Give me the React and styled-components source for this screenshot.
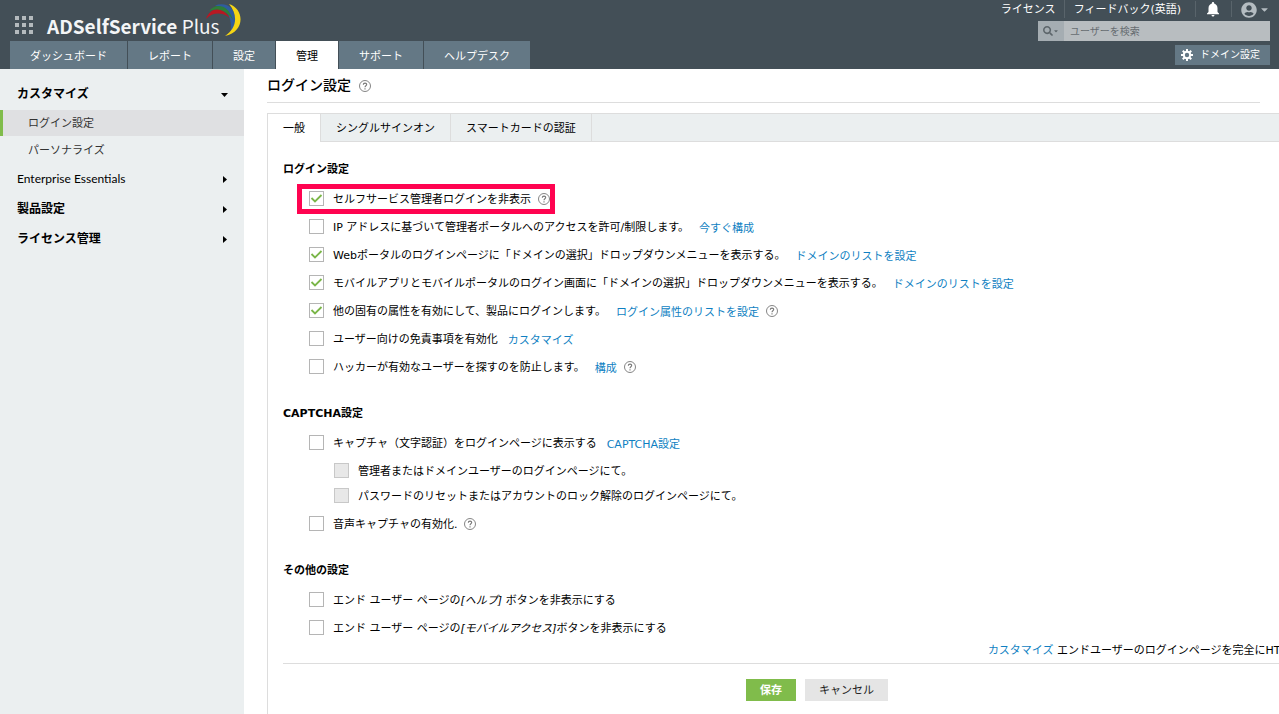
import React, { useState } from "react";
import styled, { createGlobalStyle } from "styled-components";
import { FaSearch, FaUserCircle, FaCaretDown } from "react-icons/fa";
import { MdNotifications } from "react-icons/md";

const GlobalStyle = createGlobalStyle`
    * {
        box-sizing: border-box;
    }
    body {
        margin: 0;
        background: #fff;
        color: #000;
        font: 11px/16px "DejaVu Sans", "Noto Sans CJK JP", sans-serif;
        overflow-x: hidden;
    }
    button, input {
        font: inherit;
    }
    a {
        text-decoration: none;
    }
`

const Page = styled.div`
    display: flex;
    flex-direction: column;
    min-height: 100vh;
`

/* header */

const Header = styled.header`
    display: flex;
    justify-content: space-between;
    height: 69px;
    padding: 0 9px 0 10px;
    background: #434f57;
`
const HeaderLeft = styled.div`
    display: flex;
    flex-direction: column;
    justify-content: space-between;
`
const HeaderRight = styled.div`
    display: flex;
    flex-direction: column;
    align-items: flex-end;
    gap: 4px;
`
const Brand = styled.div`
    display: flex;
    align-items: flex-start;
    height: 41px;
    padding-left: 5px;
`
const AppsButton = styled.button`
    display: grid;
    grid-template-columns: repeat(3, 4px);
    gap: 3px;
    margin: 16px 14px 0 0;
    padding: 0;
    border: 0;
    background: none;
`
const Dot = styled.span`
    width: 4px;
    height: 4px;
    background: #b4babd;
`
const BrandName = styled.span`
    padding-top: 12px;
    color: #f4f5f6;
    font: 700 19px/28px "Noto Sans CJK JP", sans-serif;
    white-space: nowrap;
`
const BrandLight = styled.span`
    font-weight: 400;
`
const Swoosh = styled.svg`
    width: 37px;
    height: 36px;
    margin: 2px 0 0 -16px;
`
const Nav = styled.nav`
    display: flex;
    gap: 1px;
`
const NavTab = styled.a`
    padding: 8px 20px 4px;
    background: ${props => (props.$active ? "#fff" : "#647885")};
    color: ${props => (props.$active ? "#000" : "#fff")};
    white-space: nowrap;
`
const TopLinks = styled.div`
    display: flex;
    align-items: center;
    height: 17px;
`
const TopLink = styled.a`
    padding: 2px 8px 0 9px;
    color: #fff;
    line-height: 16px;
    white-space: nowrap;
    & + & {
        border-left: 1px solid #59646b;
    }
`
const IconButton = styled.button`
    display: flex;
    align-items: center;
    gap: 2px;
    height: 16px;
    margin-left: 6px;
    padding: ${props => props.$pad};
    border: 0;
    border-left: 1px solid #59646b;
    background: none;
    color: ${props => props.$color};
`
const Search = styled.form`
    display: flex;
    width: 232px;
    height: 20px;
    background: #b8bdc0;
`
const SearchType = styled.button`
    display: flex;
    align-items: center;
    justify-content: center;
    width: 26px;
    padding: 0;
    border: 0;
    background: #a5adb2;
    color: #5d666b;
`
const SearchInput = styled.input`
    flex: 1;
    min-width: 0;
    padding: 2px 6px 0;
    border: 0;
    background: none;
    font-size: 10px;
    &::placeholder {
        color: #666c70;
        opacity: 1;
    }
`
const DomainButton = styled.button`
    display: flex;
    align-items: center;
    gap: 6px;
    height: 20px;
    padding: 0 10px 0 5px;
    border: 0;
    background: #647885;
    color: #fff;
    font-size: 10px;
    white-space: nowrap;
`

/* sidebar */

const Columns = styled.div`
    display: flex;
    flex: 1;
`
const Sidebar = styled.aside`
    flex: 0 0 244px;
    padding-top: 10px;
    background: #ebeff0;
`
const Group = styled.button`
    display: flex;
    align-items: center;
    justify-content: space-between;
    width: 100%;
    height: 30px;
    padding: 0 15px 0 17px;
    border: 0;
    background: none;
    color: #000;
    font: ${props => (props.$latin ? 400 : 700)} 12px/16px Lato, "Noto Sans CJK JP", sans-serif;
`
const Arrow = styled.svg`
    width: 9px;
    height: 9px;
`
const SubMenu = styled.div`
    display: flex;
    flex-direction: column;
    gap: 1px;
    padding: 1px 0;
`
const SubItem = styled.a`
    padding: 6px 0 4px 25px;
    border-left: 3px solid ${props => (props.$active ? "#80bc4b" : "transparent")};
    background: ${props => (props.$active ? "#dfe0e2" : "none")};
    color: #333;
`

/* content */

const Main = styled.main`
    flex: 1;
    min-width: 0;
    padding-left: 23px;
    overflow: hidden;
`
const TitleBar = styled.div`
    display: flex;
    align-items: center;
    gap: 8px;
    height: 34px;
    margin-right: 19px;
    border-bottom: 1px solid #ddd;
`
const Title = styled.h1`
    margin: 0;
    padding-bottom: 2px;
    font-size: 14px;
    line-height: 20px;
    font-weight: 500;
`
const HelpSvg = styled.svg`
    display: block;
    flex: none;
    width: 12px;
    height: 12px;
`
const Panel = styled.section`
    min-width: 1084px;
    min-height: calc(100% - 44px);
    margin-top: 10px;
    border-left: 1px solid #ddd;
`
const TabStrip = styled.div`
    display: flex;
    border-top: 1px solid #ddd;
    background: #ebeff0;
    box-shadow: inset 0 -1px #ddd;
`
const Tab = styled.button`
    height: 28px;
    padding: 1px 15px 0;
    border: solid #ddd;
    border-width: 0 1px 0 0;
    background: ${props => (props.$active ? "#fff" : "none")};
    color: #000;
    white-space: nowrap;
`
const Body = styled.div`
    padding: 15px 0 13px 15px;
`
const Section = styled.section`
    margin-bottom: 20px;
    &:last-of-type {
        margin-bottom: 0;
    }
`
const Heading = styled.h2`
    margin: 0 0 3px;
    padding-top: 1px;
    font-size: 11px;
    line-height: 24px;
    font-weight: 700;
`
const Row = styled.div`
    position: relative;
    display: flex;
    align-items: center;
    width: fit-content;
    height: ${props => (props.$sub ? 25 : 28)}px;
    margin-left: ${props => (props.$sub ? 51 : 26)}px;
    white-space: nowrap;
`
const SubRows = styled.div`
    padding: 1px 0 2px;
`
const CheckLabel = styled.label`
    display: flex;
    align-items: center;
    gap: 9px;
`
const CheckText = styled.span`
    padding-top: 2px;
`
const Check = styled.input`
    appearance: none;
    width: 15px;
    height: 15px;
    margin: 0 0 1px;
    border: 1px solid #b5b5b5;
    background: #fff;
    &:checked {
        background: #fff url("data:image/svg+xml,%3Csvg xmlns='http://www.w3.org/2000/svg' viewBox='0 0 13 13'%3E%3Cpath d='M1.5 6 5 9.5 11.5 3' fill='none' stroke='%237ab648' stroke-width='1.8'/%3E%3C/svg%3E");
    }
    &:disabled {
        border-color: #c8c8c8;
        background: #e8e8e8;
    }
`
const Link = styled.a`
    color: #0f7fc2;
`
const RowLink = styled(Link)`
    padding: 4px 0 0 10px;
`
const RowHelp = styled.span`
    padding-left: 7px;
`
const Highlight = styled.span`
    position: absolute;
    inset: 0 -4px 0 -11px;
    border: 4px solid #ff0350;
    box-shadow: 0 0 0 1px #ff0350;
    pointer-events: none;
`
const Note = styled.p`
    margin: 0;
    padding: 1px 0 4px 66%;
    border-bottom: 1px solid #ddd;
    white-space: nowrap;
`
const Actions = styled.div`
    display: flex;
    justify-content: center;
    gap: 9px;
    padding-top: 15px;
`
const Action = styled.button`
    height: 22px;
    padding: 2px 14px 0;
    border: 0;
    background: ${props => (props.$primary ? "#80bc4b" : "#e5e5e5")};
    color: ${props => (props.$primary ? "#fff" : "#222")};
    font-weight: ${props => (props.$primary ? 700 : 400)};
`

const navTabs = ["ダッシュボード", "レポート", "設定", "管理", "サポート", "ヘルプデスク"]
const tabs = ["一般", "シングルサインオン", "スマートカードの認証"]

const loginRows = [
    { id: "hideAdmin", text: "セルフサービス管理者ログインを非表示", on: true, help: true, highlight: true },
    { id: "ip", text: "IP アドレスに基づいて管理者ポータルへのアクセスを許可/制限します。", link: "今すぐ構成" },
    { id: "web", text: "Webポータルのログインページに「ドメインの選択」ドロップダウンメニューを表示する。", on: true, link: "ドメインのリストを設定" },
    { id: "mobile", text: "モバイルアプリとモバイルポータルのログイン画面に「ドメインの選択」ドロップダウンメニューを表示する。", on: true, link: "ドメインのリストを設定" },
    { id: "attr", text: "他の固有の属性を有効にして、製品にログインします。", on: true, link: "ログイン属性のリストを設定", help: true },
    { id: "disclaimer", text: "ユーザー向けの免責事項を有効化", link: "カスタマイズ" },
    { id: "hacker", text: "ハッカーが有効なユーザーを探すのを防止します。", link: "構成", help: true },
]

const Help = () => (
    <HelpSvg viewBox="0 0 12 12" role="img" aria-label="ヘルプ">
        <circle cx="6" cy="6" r="5.5" fill="none" stroke="#858585" />
        <path d="M4.3 4.8C4.3 2.5 7.8 2.6 7.7 4.6 7.7 5.8 6 5.8 6 7.2M6 8.2v1.2" fill="none" stroke="#777" strokeWidth="1.1" />
    </HelpSvg>
)

const Gear = () => (
    <svg width="14" height="14" viewBox="0 0 14 14" fill="none" stroke="#fff">
        <circle cx="7" cy="7" r="3.2" strokeWidth="2" />
        {[0, 45, 90, 135].map(angle => (
            <path key={angle} d="M7 1v2.5M7 10.5v2.5" strokeWidth="2" transform={`rotate(${angle} 7 7)`} />
        ))}
    </svg>
)

const Setting = props => (
    <Row $sub={props.sub}>
        <CheckLabel>
            <Check type="checkbox" defaultChecked={props.on} disabled={props.sub} />
            <CheckText>{props.text}</CheckText>
        </CheckLabel>
        {props.link && <RowLink href="#">{props.link}</RowLink>}
        {props.help && <RowHelp><Help /></RowHelp>}
        {props.highlight && <Highlight />}
    </Row>
)

const MenuGroup = props => (
    <Group $latin={props.latin}>
        {props.title}
        <Arrow viewBox="0 0 9 9">
            <path d={props.open ? "M1 3h7L4.5 7z" : "M3 1v7l4-3.5z"} />
        </Arrow>
    </Group>
)

const App = () => {
    const [tab, setTab] = useState(0)

    return (
        <Page>
            <GlobalStyle />
            <Header>
                <HeaderLeft>
                    <Brand>
                        <AppsButton aria-label="アプリ">
                            {[...Array(9)].map((_, i) => <Dot key={i} />)}
                        </AppsButton>
                        <BrandName>ADSelfService <BrandLight>Plus</BrandLight></BrandName>
                        <Swoosh viewBox="0 0 37 36">
                            <path d="M11 3.5C22-1 33 6 31 20 31 24 30 26 27 30 28 15 23 6 11 3.5z" fill="#2f5c9e" />
                            <path d="M5 9C12 1 24 2 29 18 22 8 14 6 5 9z" fill="#2e7d3a" />
                            <path d="M2 17C6 5 18 4 26 16 18 10 9 10 2 17z" fill="#b81822" />
                            <path d="M25 2C41 7 41 30 21 34 32 27 35 14 25 2z" fill="#f5d515" />
                        </Swoosh>
                    </Brand>
                    <Nav>
                        {navTabs.map(name => (
                            <NavTab key={name} href="#" $active={name === "管理"}>{name}</NavTab>
                        ))}
                    </Nav>
                </HeaderLeft>
                <HeaderRight>
                    <TopLinks>
                        <TopLink href="#">ライセンス</TopLink>
                        <TopLink href="#">フィードバック(英語)</TopLink>
                        <IconButton aria-label="通知" $pad="0 3px 0 8px" $color="#fff">
                            <MdNotifications size={18} />
                        </IconButton>
                        <IconButton aria-label="アカウント" $pad="2px 0 0 9px" $color="#b4bcc1">
                            <FaUserCircle size={16} />
                            <FaCaretDown size={11} />
                        </IconButton>
                    </TopLinks>
                    <Search>
                        <SearchType type="button" aria-label="検索対象">
                            <FaSearch size={10} />
                            <FaCaretDown size={6} />
                        </SearchType>
                        <SearchInput aria-label="ユーザーを検索" placeholder="ユーザーを検索" />
                    </Search>
                    <DomainButton><Gear />ドメイン設定</DomainButton>
                </HeaderRight>
            </Header>
            <Columns>
                <Sidebar>
                    <MenuGroup title="カスタマイズ" open />
                    <SubMenu>
                        <SubItem href="#" $active>ログイン設定</SubItem>
                        <SubItem href="#">パーソナライズ</SubItem>
                    </SubMenu>
                    <MenuGroup title="Enterprise Essentials" latin />
                    <MenuGroup title="製品設定" />
                    <MenuGroup title="ライセンス管理" />
                </Sidebar>
                <Main>
                    <TitleBar>
                        <Title>ログイン設定</Title>
                        <Help />
                    </TitleBar>
                    <Panel>
                        <TabStrip>
                            {tabs.map((name, i) => (
                                <Tab key={name} $active={i === tab} onClick={() => setTab(i)}>{name}</Tab>
                            ))}
                        </TabStrip>
                        <Body>
                            <Section>
                                <Heading>ログイン設定</Heading>
                                {loginRows.map(({ id, ...row }) => <Setting key={id} {...row} />)}
                            </Section>
                            <Section>
                                <Heading>CAPTCHA設定</Heading>
                                <Setting text="キャプチャ（文字認証）をログインページに表示する" link="CAPTCHA設定" />
                                <SubRows>
                                    <Setting sub text="管理者またはドメインユーザーのログインページにて。" />
                                    <Setting sub text="パスワードのリセットまたはアカウントのロック解除のログインページにて。" />
                                </SubRows>
                                <Setting text="音声キャプチャの有効化." help />
                            </Section>
                            <Section>
                                <Heading>その他の設定</Heading>
                                <Setting text={<>エンド ユーザー ページの<i>[ヘルプ]</i> ボタンを非表示にする</>} />
                                <Setting text={<>エンド ユーザー ページの<i>[モバイルアクセス]</i>ボタンを非表示にする</>} />
                            </Section>
                            <Note><Link href="#">カスタマイズ</Link> エンドユーザーのログインページを完全にHT</Note>
                            <Actions>
                                <Action $primary>保存</Action>
                                <Action>キャンセル</Action>
                            </Actions>
                        </Body>
                    </Panel>
                </Main>
            </Columns>
        </Page>
    )
}

export default App;
